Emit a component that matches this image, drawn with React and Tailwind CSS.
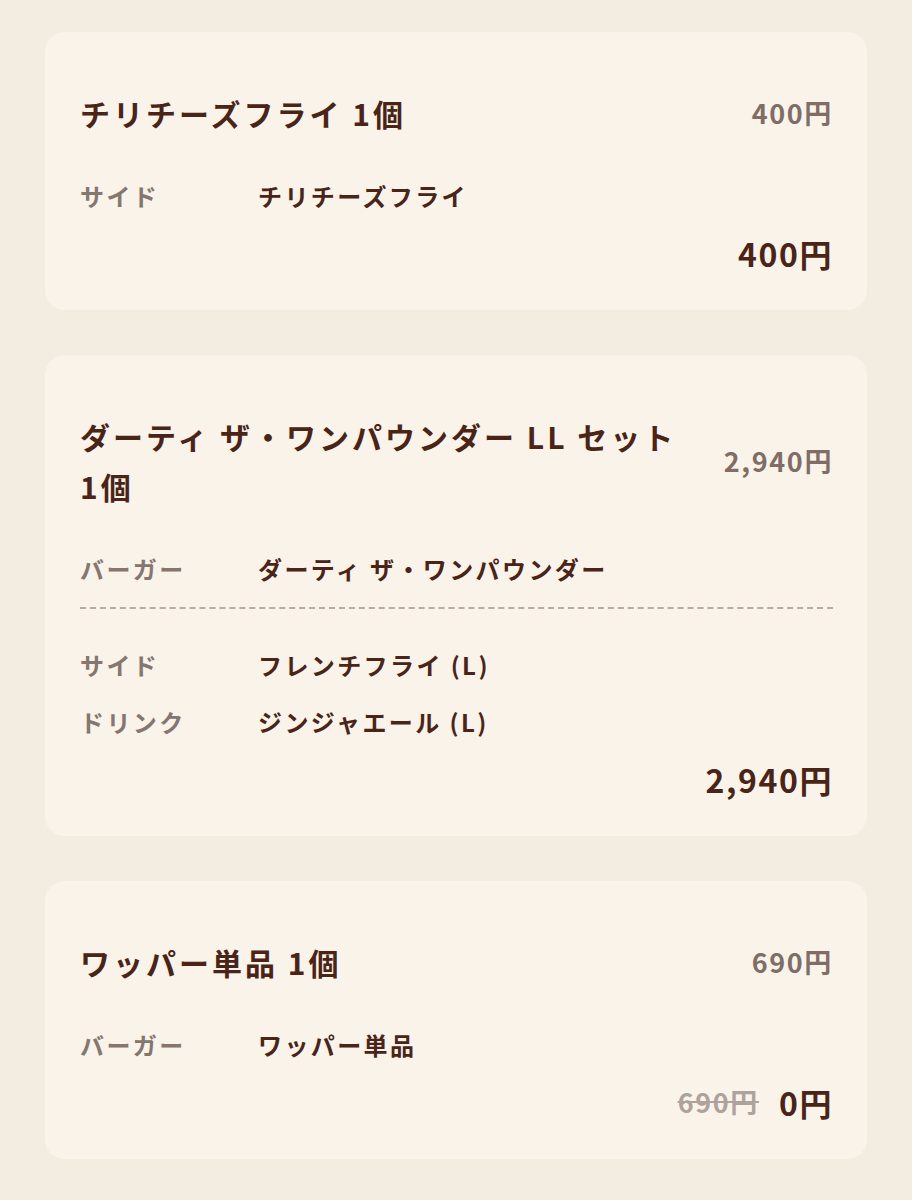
import React from 'react';

const orders = [
  {
    name: 'チリチーズフライ 1個',
    price: '400円',
    sections: [[{ label: 'サイド', value: 'チリチーズフライ' }]],
    total: '400円',
  },
  {
    name: 'ダーティ ザ・ワンパウンダー LL セット 1個',
    price: '2,940円',
    sections: [
      [{ label: 'バーガー', value: 'ダーティ ザ・ワンパウンダー' }],
      [
        { label: 'サイド', value: 'フレンチフライ (L)' },
        { label: 'ドリンク', value: 'ジンジャエール (L)' },
      ],
    ],
    total: '2,940円',
  },
  {
    name: 'ワッパー単品 1個',
    price: '690円',
    sections: [[{ label: 'バーガー', value: 'ワッパー単品' }]],
    total: '0円',
    original: '690円',
  },
];

const OrderCard = ({ order }) => (
  <div className="bg-[#f9f3ea] rounded-[20px] pl-[35px] pr-[34px] pt-[56px] pb-[37px]">
    <div className="flex items-center justify-between gap-6">
      <h3 className="flex-1 text-[30px] leading-[50px] font-bold tracking-[0.1em] text-[#4a2417]">
        {order.name}
      </h3>
      <span className="text-[27px] leading-[50px] font-bold tracking-[0.06em] text-[#7f6d66] whitespace-nowrap">
        {order.price}
      </span>
    </div>

    <div className="mt-[40px]">
      {order.sections.map((rows, i) => (
        <div key={i}>
          {i > 0 && (
            <div className="mt-[20px] mb-[38px] border-t-2 border-dashed border-[#b8aca5]" />
          )}
          <div className="flex flex-col gap-[21px]">
            {rows.map((row) => (
              <div key={row.label} className="grid grid-cols-[178px_1fr] text-[24px] leading-[36px] font-bold tracking-[0.1em]">
                <span className="text-[#85766f]">{row.label}</span>
                <span className="text-[#4a2417]">{row.value}</span>
              </div>
            ))}
          </div>
        </div>
      ))}
    </div>

    <div className="mt-[19px] flex items-center justify-end gap-5 leading-[40px] font-bold">
      {order.original && (
        <span className="text-[27px] tracking-[0.06em] text-[#ada29c] line-through">
          {order.original}
        </span>
      )}
      <span className="text-[32px] tracking-[0.05em] text-[#4a2417]">{order.total}</span>
    </div>
  </div>
);

export default function App() {
  return (
    <div
      className="min-h-[1200px] bg-[#f3ece1] px-[45px] pt-[32px] pb-[42px] flex flex-col gap-[45px]"
      style={{ fontFamily: '"Noto Sans CJK JP", "Noto Sans", sans-serif' }}
    >
      {orders.map((order) => (
        <OrderCard key={order.name} order={order} />
      ))}
    </div>
  );
}
